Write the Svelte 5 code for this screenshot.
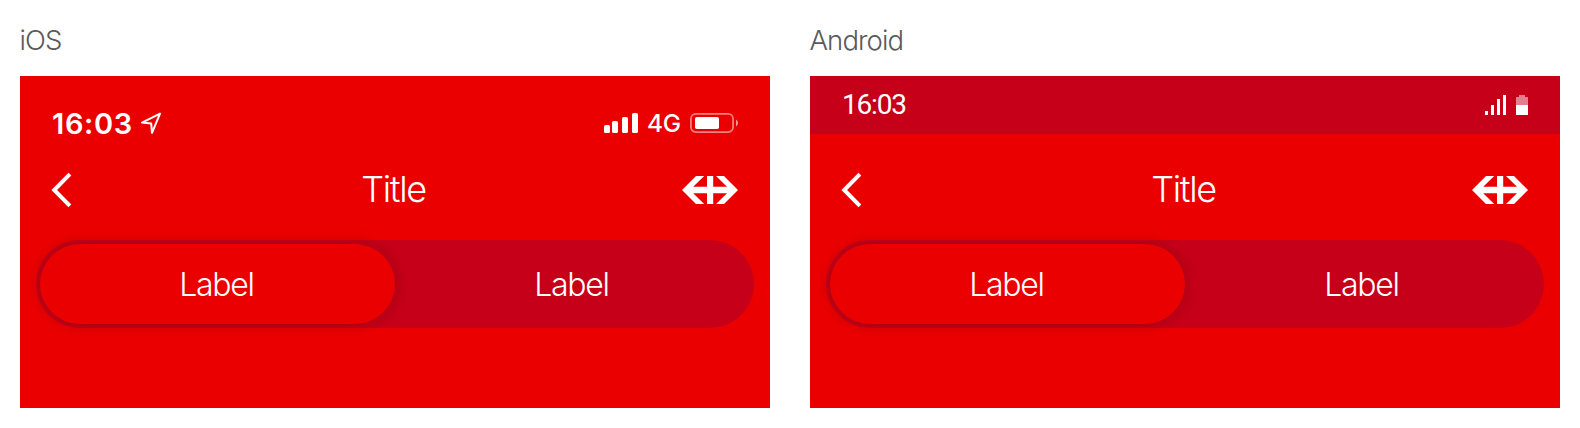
<script>
  const panels = [
    { name: 'iOS', os: 'ios' },
    { name: 'Android', os: 'android' }
  ];
  const labels = ['Label', 'Label'];
  let selected = $state(0);
</script>

<main>
  {#each panels as panel}
    <section>
      <h2 class={panel.os}>{panel.name}</h2>
      <div class="screen">
        {#if panel.os === 'ios'}
          <div class="status status-ios">
            <span class="time">16:03</span>
            <svg class="location" width="22" height="24" viewBox="0 0 22 24">
              <path d="M20 2.6 2 11.6 11.2 12.6 12 21.8Z" fill="none" stroke="#fff" stroke-width="2" stroke-linejoin="round" />
            </svg>
            <svg class="signal" width="34" height="20" viewBox="0 0 34 20" fill="#fff">
              <rect y="12" width="6" height="8" rx="1.6" />
              <rect x="8" y="8" width="6" height="12" rx="1.6" />
              <rect x="18" y="4" width="6" height="16" rx="1.6" />
              <rect x="28" width="6" height="20" rx="1.6" />
            </svg>
            <span class="network">4G</span>
            <svg class="battery" width="48" height="20" viewBox="0 0 48 20">
              <rect x=".9" y=".9" width="42.2" height="18.2" rx="5" fill="none" stroke="#fff" stroke-opacity=".5" stroke-width="1.8" />
              <rect x="5" y="4" width="24" height="12" rx="1.8" fill="#fff" />
              <path d="M46 6.5Q48 7.5 48 10T46 13.5Z" fill="#fff" fill-opacity=".6" />
            </svg>
          </div>
        {:else}
          <div class="status status-android">
            <span class="time">16:03</span>
            <svg class="signal" width="21" height="20" viewBox="0 0 21 20" fill="#fff">
              <path d="M0 16H3V20H0ZM6 10H9V20H6ZM12 4H15V20H12ZM18 0H21V20H18Z" />
            </svg>
            <svg class="battery" width="12" height="20" viewBox="0 0 12 20" fill="#fff">
              <path d="M3 0H9V2H12V10H0V2H3Z" fill-opacity=".5" />
              <path d="M0 10H12V20H0Z" />
            </svg>
          </div>
        {/if}
        <header>
          <svg class="back" width="22" height="36" viewBox="0 0 22 36">
            <path d="M18.9 2.1 3.2 18 18.9 33.9" fill="none" stroke="#fff" stroke-width="4" />
          </svg>
          <h1>Title</h1>
          <svg class="logo" width="56" height="28" viewBox="0 0 56 28" fill="#fff">
            <path d="M14 0H22.2L11.2 10.8H25V0H31.2V10.8H45L34 0H42L56 14 42 28H34L45 17.2H31.2V28H25V17.2H11.2L22.2 28H14L0 14Z" />
          </svg>
        </header>
        <div class="segmented">
          {#each labels as label, i}
            <button class:active={selected === i} onclick={() => (selected = i)}>{label}</button>
          {/each}
        </div>
      </div>
    </section>
  {/each}
</main>

<style>
  :global(body) {
    background: #fff;
  }
  main {
    display: grid;
    grid-template-columns: 750px 750px;
    gap: 40px;
    padding: 0 20px;
    font-family: Inter, 'Liberation Sans', sans-serif;
  }
  h2 {
    margin: 0;
    height: 76px;
    line-height: 80px;
    font-size: 27.5px;
    font-weight: 300;
    letter-spacing: -0.9px;
    text-indent: -0.5px;
    color: #5a5a5a;
  }
  .screen {
    height: 332px;
    background: #eb0000;
    color: #fff;
  }
  .status {
    display: flex;
    align-items: center;
    box-sizing: border-box;
  }
  .status-ios {
    height: 66px;
    padding: 28px 32px 0 32px;
  }
  .status-ios .time {
    width: 88px;
    font-size: 29px;
    font-weight: 600;
    letter-spacing: 0.65px;
  }
  .status-ios .signal {
    margin-left: auto;
  }
  .network {
    width: 42px;
    margin-left: 9px;
    box-sizing: border-box;
    font-size: 24.5px;
    font-weight: 500;
    letter-spacing: -0.3px;
  }
  .status-ios .battery {
    margin-left: 1px;
  }
  .status-android {
    height: 58px;
    padding: 0 32px;
    margin-bottom: 8px;
    background: #c60018;
    font-family: Roboto, sans-serif;
    font-size: 28px;
    letter-spacing: -1.2px;
  }
  .status-android .time {
    padding-bottom: 2px;
  }
  .status-android .signal {
    margin-left: auto;
    margin-right: 10px;
  }
  header {
    display: grid;
    grid-template-columns: 100px 1fr 100px;
    align-items: center;
    height: 96px;
    padding: 0 32px 0 31px;
  }
  h1 {
    margin: 0;
    padding: 0 2px 2px 0;
    text-align: center;
    font-size: 36px;
    font-weight: 300;
    letter-spacing: -1.4px;
  }
  .logo {
    justify-self: end;
  }
  .segmented {
    display: grid;
    grid-template-columns: 355px 355px;
    box-sizing: border-box;
    width: 718px;
    height: 88px;
    margin: 2px 16px 0;
    padding: 4px;
    border-radius: 44px;
    background: #c60018;
  }
  button {
    border: 0;
    padding: 1px 2px 0 0;
    border-radius: 40px;
    background: none;
    color: #fff;
    font: 300 32px Inter, 'Liberation Sans', sans-serif;
    letter-spacing: -1.3px;
  }
  button.active {
    background: #eb0000;
    box-shadow: 0 0 16px rgba(0, 0, 0, 0.2);
  }
</style>
